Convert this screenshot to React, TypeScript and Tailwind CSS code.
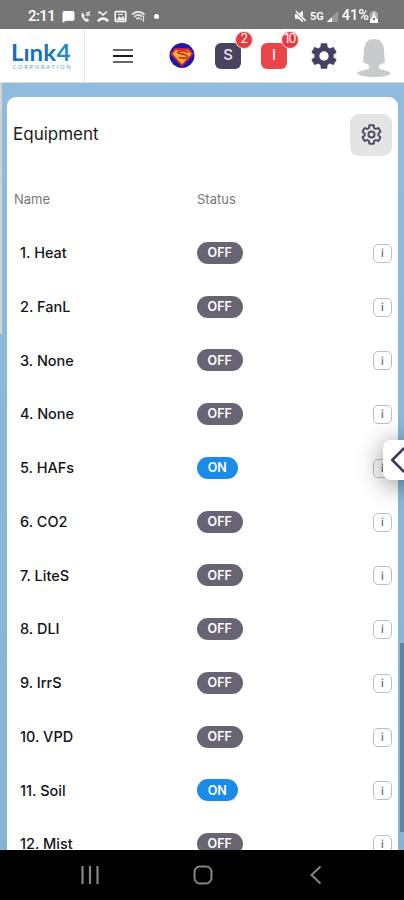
import { ChevronLeft, MessageSquare } from "lucide-react";

const equipments = [
  { name: "1. Heat", on: false },
  { name: "2. FanL", on: false },
  { name: "3. None", on: false },
  { name: "4. None", on: false },
  { name: "5. HAFs", on: true },
  { name: "6. CO2", on: false },
  { name: "7. LiteS", on: false },
  { name: "8. DLI", on: false },
  { name: "9. IrrS", on: false },
  { name: "10. VPD", on: false },
  { name: "11. Soil", on: true },
  { name: "12. Mist", on: false },
];

const GEAR =
  "M19.14 12.94c.04-.3.06-.61.06-.94 0-.32-.02-.64-.07-.94l2.03-1.58a.49.49 0 0 0 .12-.61l-1.92-3.32a.488.488 0 0 0-.59-.22l-2.39.96c-.5-.38-1.03-.7-1.62-.94l-.36-2.54a.484.484 0 0 0-.48-.41h-3.84c-.24 0-.43.17-.47.41l-.36 2.54c-.59.24-1.13.57-1.62.94l-2.39-.96c-.22-.08-.47 0-.59.22L2.74 8.87c-.12.21-.08.47.12.61l2.03 1.58c-.05.3-.09.63-.09.94s.02.64.07.94l-2.03 1.58a.49.49 0 0 0-.12.61l1.92 3.32c.12.22.37.29.59.22l2.39-.96c.5.38 1.03.7 1.62.94l.36 2.54c.05.24.24.41.48.41h3.84c.24 0 .44-.17.47-.41l.36-2.54c.59-.24 1.13-.56 1.62-.94l2.39.96c.22.08.47 0 .59-.22l1.92-3.32c.12-.22.07-.47-.12-.61l-2.01-1.58z";

const StatusBar = () => {
  return (
    <div className="flex h-[29px] shrink-0 items-center justify-between bg-[#757575] pl-7 pr-[25px] pt-[3px] font-['Roboto',sans-serif] text-white">
      <div className="flex items-center">
        <span className="w-[34px] text-[15px] font-medium leading-none tracking-[-0.6px]">
          2:11
        </span>
        <MessageSquare size={13} fill="white" strokeWidth={2} />
        <svg className="ml-1" width="13" height="13" viewBox="0 0 13 13" fill="none" stroke="#f1f1f1">
          <path d="M3 3.2C2.2 5 3.2 8 5 9.8s3.6 2 4.8 1l-1.3-2-1.8.5L4.6 7l.7-1.6L3.7 3z" fill="#f1f1f1" strokeWidth="0.7" />
          <path d="M7 2.5c2 .2 3.3 1.5 3.6 3.5M7 5c.8.1 1.2.5 1.4 1.2M11 1.5 7.5 5" strokeWidth="1.2" />
        </svg>
        <svg className="ml-1" width="14" height="13" viewBox="0 0 14 13" fill="none" stroke="#f6f6f6">
          <path d="m3 1.5 4 3.4 4-3.4M3 1.5v2" strokeWidth="1.5" />
          <path d="M1.4 10.5c2.6-3.7 8.6-3.7 11.2 0l-1.8 1-1.8-1.7c-1.3-.5-2.7-.5-4 0l-1.8 1.7z" fill="#f6f6f6" strokeWidth="0.9" />
        </svg>
        <svg className="ml-1" width="13" height="13" viewBox="0 0 13 13" fill="none" stroke="#f6f6f6">
          <rect x="1.2" y="1.6" width="10.6" height="9.8" rx="0.8" strokeWidth="1.6" />
          <path d="m2.5 10 2.8-3.5L7 8.2l2-2 2 3.8z" fill="#f6f6f6" strokeWidth="0.4" />
          <path d="M4 4.4h5" />
        </svg>
        <svg className="ml-1" width="15" height="13" viewBox="0 0 15 13" fill="none" stroke="#e8e8e8">
          <path d="M1 4.8c3.5-4 9-4 12.6 0M3.2 7c2.2-2.6 5.6-2.8 8-.3M5.4 9.2c1-1.2 2.4-1.3 3.5-.5" strokeWidth="1.7" />
          <path d="M12.5 5.5v6.3M10.2 8.3v2" strokeWidth="1.2" />
        </svg>
        <span className="ml-2 h-[5px] w-[5px] rounded-full bg-white" />
      </div>
      <div className="flex items-center">
        <svg width="13" height="13" viewBox="0 0 13 13" fill="white">
          <path d="M1 4h3.3L9 .5v12L4.3 8.7H1z" />
          <path d="m1.2 1 10.6 10.7" stroke="#757575" strokeWidth="2.4" />
          <path d="m1.8 1 10 10" stroke="white" strokeWidth="1.5" />
        </svg>
        <span className="ml-[3px] text-[11px] font-semibold leading-none">5G</span>
        <svg className="ml-[3px]" width="11" height="11" viewBox="0 0 11 11">
          <path d="M11 0v11H0z" fill="#9b9b9b" />
          <path d="M5 6v5H0z" fill="white" />
        </svg>
        <span className="ml-1 text-[14.5px] font-medium leading-none">
          41%
        </span>
        <svg width="10" height="13" viewBox="0 0 10 13">
          <path d="M3 1h4v1.5h2V13H1V2.5h2z" fill="#b0b0b0" />
          <path d="M1 9h8v4H1z" fill="white" />
          <path d="M5 2.5v3M2.5 9.5 5 4.5l2.5 5z" fill="white" stroke="white" />
          <circle cx="5" cy="9" r="1.2" fill="#777" />
        </svg>
      </div>
    </div>
  );
};

const Logo = () => {
  return (
    <svg width="66" height="50" viewBox="0 0 66 50" className="font-['Lato',sans-serif]">
      <text x="2" y="29.5" fontSize="22" fontWeight="700" fill="#1b70b5" textLength="45" lengthAdjust="spacingAndGlyphs">
        Lınk
      </text>
      <text x="47.5" y="29.5" fontSize="22" fontWeight="700" fill="#2489c9" textLength="14" lengthAdjust="spacingAndGlyphs">
        4
      </text>
      <text x="3.5" y="38" fontSize="5.6" fill="#5b9dcb" textLength="58">
        CORPORATION
      </text>
    </svg>
  );
};

const HeroBadge = () => {
  return (
    <svg width="26" height="27" viewBox="0 0 26 27">
      <circle cx="13" cy="13.5" r="12.5" fill="#2019ad" />
      <path d="M6.5 7h13l4 5L13 23.500 2.500 12z" fill="#f5b735" stroke="#d9242c" strokeWidth="1.8" />
      <path d="M19.500 10.500c-2-1.800-9.500-2.200-10.500-.3-.8 2 9 1.500 9.200 4.200.2 2.300-5.500 2.300-8.500.8" fill="none" stroke="#d9242c" strokeWidth="1.800" />
    </svg>
  );
};

const AlertTile = ({ letter, count, color }) => {
  return (
    <div className={`relative flex h-[26px] w-[26px] items-center justify-center rounded-[6px] text-[15px] font-medium text-[#ededf0] ${color}`}>
      {letter}
      <span className="absolute -right-[12px] -top-[12px] flex h-[18px] w-[18px] items-center justify-center rounded-full border border-[#fbe0e0] bg-[#e8393f] text-[12.5px] font-normal tracking-tighter text-white">
        {count}
      </span>
    </div>
  );
};

const Header = () => {
  return (
    <div className="flex h-[54px] shrink-0 items-center border-b border-[#d5dce1] bg-white">
      <div className="flex h-full w-[85px] items-center border-r border-[#e2e2e4] pl-[9px]">
        <Logo />
      </div>
      <svg className="ml-[27px]" width="22" height="16" viewBox="0 0 22 16">
        <path d="M1 2h20M1 14h20" stroke="#68686c" strokeWidth="2" />
        <path d="M1 8h20" stroke="#1c1c20" strokeWidth="2" />
      </svg>
      <div className="ml-[35px]">
        <HeroBadge />
      </div>
      <div className="ml-5">
        <AlertTile letter="S" count="2" color="bg-[#48435f]" />
      </div>
      <div className="ml-5">
        <AlertTile letter="I" count="10" color="bg-[#e9444a]" />
      </div>
      <svg className="ml-[21px]" width="32" height="32" viewBox="0 0 24 24">
        <path d={GEAR} fill="#45405f" />
        <circle cx="12" cy="12" r="3.5" fill="white" />
      </svg>
      <svg className="ml-4 mt-1" width="36" height="40" viewBox="0 0 36 40">
        <path d="M18 1C11.5 1 8.3 5.5 8 12c-.1 4-.8 8-1 12 2 1.500 3.500 1.500 5 2.500 1 1 1.500 2.500 1 4C10 32.500 3.500 32 1 35.500 5.500 40.300 30.500 40.300 35 35.500 32.500 32 26 32.500 23 30.500c-.5-1.500 0-3 1-4 1.500-1 3-1 5-2.500-.2-4-.9-8-1-12C27.700 5.500 24.500 1 18 1z" fill="#c9cacb" />
      </svg>
    </div>
  );
};

const EquipmentRow = ({ name, on }) => {
  return (
    <div className="flex h-[53.75px] items-center pl-[13px] pr-1.5">
      <span className="w-[177px] text-[14.5px] font-medium text-[#141417]">
        {name}
      </span>
      <span className={`flex h-[22px] items-center justify-center rounded-full pt-px text-[12.5px] font-semibold text-white ${on ? "w-[40.5px] bg-[#1b8bea]" : "w-[45.5px] bg-[#686473]"}`}>
        {on ? "ON" : "OFF"}
      </span>
      <span className="ml-auto mt-px flex h-[19px] w-[19px] items-center justify-center rounded-[5px] border border-[#bdbdc1] text-[11px] font-medium text-[#66666a]">
        i
      </span>
    </div>
  );
};

const EquipmentCard = () => {
  return (
    <div className="ml-[7px] mr-[6px] mt-[14px] rounded-t-[9px] bg-white">
      <div className="flex h-[75px] items-center justify-between px-1.5">
        <h1 className="text-[17px] text-[#1d1d21]">Equipment</h1>
        <button className="flex h-[42px] w-[42px] items-center justify-center rounded-[9px] bg-[#e4e4e5]">
          <svg width="23" height="23" viewBox="0 0 24 24" fill="none" stroke="#4d4966" strokeWidth="2">
            <path d={GEAR} />
            <circle cx="12" cy="12" r="3.2" />
          </svg>
        </button>
      </div>
      <div className="flex h-[54px] items-center pl-[7px] pt-0.5 text-[13px] text-[#77777b]">
        <span className="w-[183px]">Name</span>
        <span>Status</span>
      </div>
      {equipments.map((item) => (
        <EquipmentRow key={item.name} name={item.name} on={item.on} />
      ))}
    </div>
  );
};

const NavigationBar = () => {
  return (
    <div className="flex h-[50px] shrink-0 items-center bg-black pl-20">
      <svg width="20" height="20" viewBox="0 0 20 20" stroke="#858585" strokeWidth="2.2">
        <path d="M2.5 1v18M10 1v18M17.5 1v18" />
      </svg>
      <svg className="ml-[92px]" width="22" height="20" viewBox="0 0 22 20" fill="none" stroke="#858585" strokeWidth="2">
        <rect x="2.5" y="1.5" width="17" height="17" rx="5.5" />
      </svg>
      <svg className="ml-[95px]" width="14" height="20" viewBox="0 0 14 20" fill="none" stroke="#858585" strokeWidth="2">
        <path d="m11.500 1.500-9 8.500 9 8.500" />
      </svg>
    </div>
  );
};

const App = () => {
  return (
    <div className="flex h-[900px] w-[404px] flex-col overflow-hidden font-['Inter',sans-serif]">
      <StatusBar />
      <Header />
      <div className="relative min-h-0 flex-1 overflow-hidden bg-gradient-to-b from-[#8fbbdc] to-[#87b3d6]">
        <div className="absolute left-0 top-0 h-[251px] w-[2px] bg-[#d3d3d3]" />
        <EquipmentCard />
        <div className="absolute right-0 top-[560px] h-[189px] w-1 bg-[#5e84a3]" />
        <div className="absolute -right-[19px] top-[357px] flex h-10 w-10 items-center rounded-lg bg-white shadow-[0_4px_26px_rgba(0,0,0,0.45)]">
          <ChevronLeft size={46} strokeWidth={1.3} color="#3b355c" className="-ml-2 shrink-0" />
        </div>
      </div>
      <NavigationBar />
    </div>
  );
};

export default App;
